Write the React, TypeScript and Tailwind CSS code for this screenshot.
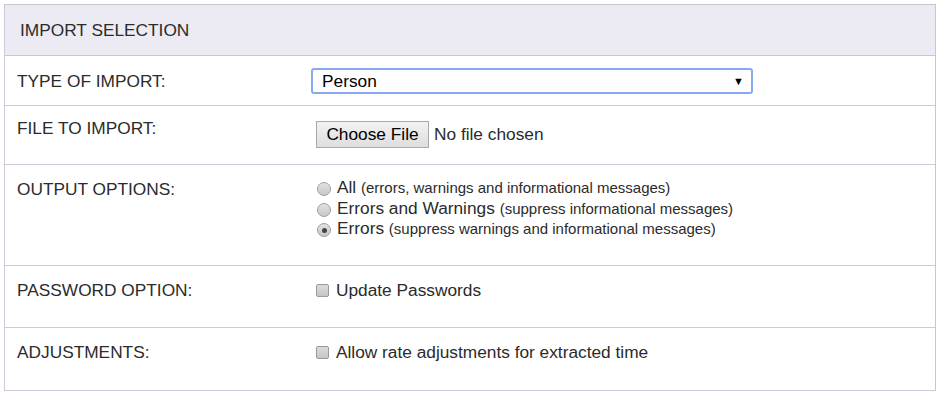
import React from 'react';

const Radio: React.FC<{ checked?: boolean }> = ({ checked }) => (
  <span className="mr-[6px] ml-[6px] mt-[5px] inline-flex h-[14px] w-[14px] shrink-0 items-center justify-center rounded-full border border-[#a0a0a0] bg-gradient-to-b from-[#e2e2e2] to-[#c8c8c8]">
    {checked && <span className="h-[5px] w-[5px] rounded-full bg-[#444]" />}
  </span>
);

const Checkbox: React.FC = () => (
  <span className="mr-[7px] ml-[5px] inline-block h-[13px] w-[13px] shrink-0 rounded-[2px] border border-[#9a9a9a] bg-gradient-to-b from-[#dcdcdc] to-[#c6c6c6]" />
);

const Row: React.FC<{ label: string; height: string; pad?: string; children: React.ReactNode }> = ({
  label,
  height,
  pad = 'pt-[12px]',
  children,
}) => (
  <div className={`flex border-t border-[#d3c6da] ${height}`}>
    <div className={`w-[306px] shrink-0 pl-[12px] ${pad}`}>{label}</div>
    <div className="flex-1 pt-[12px]">{children}</div>
  </div>
);

export default function App() {
  const options = [
    { main: 'All', note: '(errors, warnings and informational messages)', checked: false },
    { main: 'Errors and Warnings', note: '(suppress informational messages)', checked: false },
    { main: 'Errors', note: '(suppress warnings and informational messages)', checked: true },
  ];

  return (
    <div className="h-[399px] w-[940px] bg-white p-1 text-[17.3px] text-[#2b2b2b]" style={{ fontFamily: '"Liberation Sans", Arial, sans-serif' }}>
      <div className="w-[932px] border-t border-r border-t-[#c8c8c8] border-r-[#c8c8c8] border-b border-l border-b-[#d3c6da] border-l-[#d3c6da]">
        {/* Header */}
        <div className="flex h-[51px] items-center border-b border-[#c8c8c8] bg-[#ecebf3] pl-[15px] pt-[2px]">
          IMPORT SELECTION
        </div>

        {/* Type of import - header draws the line above */}
        <div className="flex h-[49px]">
          <div className="w-[306px] shrink-0 pl-[12px] pt-[13px]">TYPE OF IMPORT:</div>
          <div className="flex-1 pt-[12px]">
            <div className="flex h-[26px] w-[442px] items-center justify-between rounded-[3px] border-2 border-[#86a9f2] pr-[7px] pl-[9px] pt-[1px] text-black">
              <span>Person</span>
              <span className="text-[11px] text-black">▼</span>
            </div>
          </div>
        </div>

        <Row label="FILE TO IMPORT:" height="h-[59px]" pad="pt-[10px]">
          <div className="flex items-center pt-[3px]">
            <span className="ml-[5px] flex h-[27px] w-[113px] items-center justify-center border border-[#a9a9a9] bg-gradient-to-b from-[#f2f2f2] to-[#dedede] text-black">
              Choose File
            </span>
            <span className="ml-[5px]">No file chosen</span>
          </div>
        </Row>

        <Row label="OUTPUT OPTIONS:" height="h-[101px]">
          <div className="flex flex-col">
            {options.map((o) => (
              <div key={o.main} className="flex h-[20.5px] items-start leading-[20px]">
                <Radio checked={o.checked} />
                <span className="whitespace-nowrap">
                  {o.main} <span className="text-[15px]">{o.note}</span>
                </span>
              </div>
            ))}
          </div>
        </Row>

        <Row label="PASSWORD OPTION:" height="h-[62px]" pad="pt-[12px]">
          <div className="flex items-center">
            <Checkbox />
            <span>Update Passwords</span>
          </div>
        </Row>

        <Row label="ADJUSTMENTS:" height="h-[63px]" pad="pt-[12px]">
          <div className="flex items-center">
            <Checkbox />
            <span>Allow rate adjustments for extracted time</span>
          </div>
        </Row>
      </div>
    </div>
  );
}
